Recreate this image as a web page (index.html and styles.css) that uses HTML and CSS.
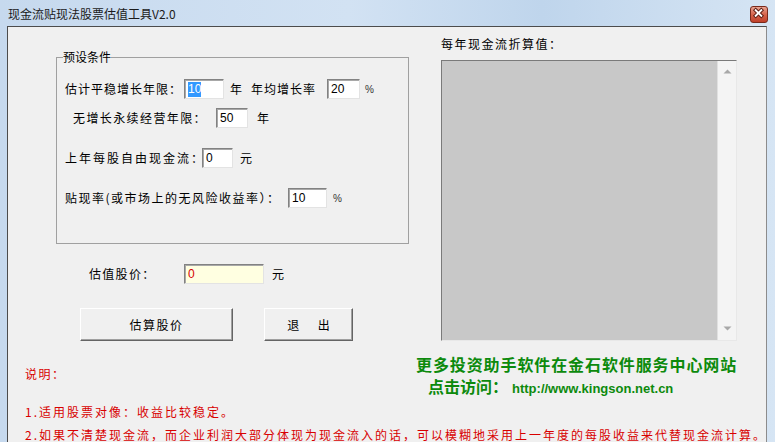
FILE: index.html
```html
<!DOCTYPE html>
<html lang="zh-CN">
  <head>
    <meta charset="UTF-8" />
    <title>现金流贴现法股票估值工具V2.0</title>
    <link rel="stylesheet" href="styles.css">
  </head>
  <body>
    <div class="window">
      <div class="titlebar">
        <span class="title">现金流贴现法股票估值工具V2.0</span>
        <div class="close">
          <svg width="18" height="17" viewBox="0 0 18 17">
            <path d="M6 5 L12 11 M12 5 L6 11" stroke="#5a1a10" stroke-width="4" stroke-linecap="square" />
            <path d="M6 5 L12 11 M12 5 L6 11" stroke="#ffffff" stroke-width="2" stroke-linecap="square" />
          </svg>
        </div>
      </div>
      <div class="client">
        <div class="top">
          <div class="form-col">
            <fieldset class="preset">
              <legend>预设条件</legend>
              <div class="row r1">
                <span class="lbl lbl-years">估计平稳增长年限：</span>
                <div class="field w40"><span class="sel">10</span></div>
                <span class="unit u1">年</span>
                <span class="lbl lbl-rate">年均增长率</span>
                <div class="field w33">20</div>
                <span class="pct p1">%</span>
              </div>
              <div class="row r2">
                <span class="lbl lbl-forever">无增长永续经营年限：</span>
                <div class="field w32">50</div>
                <span class="unit u2">年</span>
              </div>
              <div class="row r3">
                <span class="lbl lbl-cash">上年每股自由现金流：</span>
                <div class="field w31">0</div>
                <span class="unit u3">元</span>
              </div>
              <div class="row r4">
                <span class="lbl lbl-discount">贴现率(或市场上的无风险收益率）：</span>
                <div class="field w39">10</div>
                <span class="pct p2">%</span>
              </div>
            </fieldset>
            <div class="row price-row">
              <span class="lbl lbl-price">估值股价：</span>
              <div class="field w80 price">0</div>
              <span class="unit u4">元</span>
            </div>
            <div class="btn-row">
              <button class="button btn-calc">估算股价</button>
              <button class="button btn-exit">退 出</button>
            </div>
          </div>
          <div class="list-col">
            <div class="list-title">每年现金流折算值：</div>
            <div class="listbox">
              <div class="list-area"></div>
              <div class="scrollbar">
                <svg width="9" height="5" viewBox="0 0 9 5"><path d="M0.5 4.5 L4.5 0.5 L8.5 4.5 Z" fill="#a8a8a8" /></svg>
                <svg width="9" height="5" viewBox="0 0 9 5"><path d="M0.5 0.5 L4.5 4.5 L8.5 0.5 Z" fill="#a8a8a8" /></svg>
              </div>
            </div>
          </div>
        </div>
        <div class="mid">
          <div class="explain">说明：</div>
          <div class="promo">
            <div class="promo-line">更多投资助手软件在金石软件服务中心网站</div>
            <div class="promo-link">点击访问：<span class="url">http://www.kingson.net.cn</span></div>
          </div>
        </div>
        <div class="notes">
          <p>1.适用股票对像：收益比较稳定。</p>
          <p>2.如果不清楚现金流，而企业利润大部分体现为现金流入的话，可以模糊地采用上一年度的每股收益来代替现金流计算。</p>
        </div>
      </div>
    </div>
  </body>
</html>
```
FILE: styles.css
```css
* {
  margin: 0;
  padding: 0;
  box-sizing: border-box;
}

body {
  width: 775px;
  height: 442px;
  overflow: hidden;
  font-family: "Noto Sans CJK SC", sans-serif;
  font-size: 12px;
  color: #000;
}

.window {
  height: 442px;
  background: linear-gradient(90deg, #c6d9ee 0%, #d2e2f3 45%, #bfd5ec 70%, #d6e5f4 100%);
}

.titlebar {
  display: flex;
  justify-content: space-between;
  align-items: center;
  height: 26px;
  padding: 2px 7px 0 8px;
}

.title {
  color: #1b1b1b;
  line-height: 16px;
}

.close {
  width: 18px;
  height: 17px;
  border: 1px solid #7a2a1c;
  border-radius: 3px;
  background: linear-gradient(180deg, #e9a493 0%, #d6644c 50%, #c0402a 100%);
  display: flex;
  align-items: center;
  justify-content: center;
}

.close svg {
  display: block;
  margin-left: -1px;
  margin-top: -1px;
}

.client {
  margin: 0 8px 0 7px;
  height: 416px;
  background: #f0f0f0;
  border: 1px solid #4c4c4c;
  border-right-color: #8c8c8c;
  border-bottom: none;
}

.top {
  display: flex;
}

.form-col {
  width: 433px;
  padding-left: 48px;
}

.preset {
  margin-top: 23px;
  padding: 15px 0 0 8px;
  width: 353px;
  height: 194px;
  border: 1px solid #a0a0a0;
  min-width: 0;
}

.preset legend {
  margin-left: -2px;
  padding: 0;
  line-height: 14px;
}

.row {
  display: flex;
  align-items: center;
  height: 20px;
}

.r2 {
  margin-top: 9px;
  padding-left: 8px;
}

.r3, .r4 {
  margin-top: 20px;
}

.lbl {
  flex-shrink: 0;
  white-space: nowrap;
  line-height: 14px;
}

/* label widths put each field where it sits in the dialog */
.lbl-years {
  width: 119px;
  letter-spacing: 1px;
}

.lbl-rate {
  width: 76px;
  margin-left: 9px;
  letter-spacing: 1px;
}

.lbl-forever {
  width: 143px;
  letter-spacing: 1.4px;
}

.lbl-cash {
  width: 137px;
  letter-spacing: 2px;
}

.lbl-discount {
  width: 223px;
  letter-spacing: 1.5px;
}

.lbl-price {
  width: 95px;
  letter-spacing: 1.3px;
}

.field {
  flex-shrink: 0;
  height: 20px;
  border: 1px solid;
  border-color: #828282 #e3e3e3 #e3e3e3 #828282;
  box-shadow: inset 1px 1px 0 #a8a8a8;
  background: #fff;
  font-family: "Liberation Sans", Arial, sans-serif;
  font-size: 12px;
  line-height: 18px;
  padding-left: 3px;
  white-space: nowrap;
}

.w31 { width: 31px; }
.w32 { width: 32px; }
.w33 { width: 33px; }
.w39 { width: 39px; }
.w40 { width: 40px; }
.w80 { width: 80px; }

.sel {
  background: #3399ff;
  color: #fff;
  display: inline-block;
  line-height: 15px;
}

.unit {
  line-height: 14px;
}

.u1 { margin-left: 6px; }
.u2 { margin-left: 9px; }
.u3 { margin-left: 7px; }
.u4 { margin-left: 8px; }

.pct {
  font-family: "Liberation Sans", Arial, sans-serif;
  font-size: 10px;
  color: #333;
}

.p1 { margin-left: 5px; }
.p2 { margin-left: 6px; }

.price-row {
  margin-top: 20px;
  padding-left: 33px;
}

.price {
  background: #ffffe1;
  color: #d40000;
}

.btn-row {
  display: flex;
  margin-top: 24px;
  padding-left: 24px;
}

.button {
  height: 33px;
  border: 1px solid;
  border-color: #ffffff #646464 #646464 #ffffff;
  box-shadow: inset -1px -1px 0 #a0a0a0;
  background: #f0f0f0;
  font-family: "Noto Sans CJK SC", sans-serif;
  font-size: 12px;
  color: #000;
}

.btn-calc {
  width: 153px;
  letter-spacing: 1.5px;
}

.btn-exit {
  width: 89px;
  margin-left: 31px;
  letter-spacing: 8px;
  padding-left: 8px;
}

.list-col {
  padding-top: 10px;
}

.list-title {
  line-height: 14px;
  letter-spacing: 1.5px;
}

.listbox {
  display: flex;
  margin-top: 9px;
  width: 296px;
  height: 281px;
  border: 1px solid;
  border-color: #7a7a7a #e8e8e8 #e8e8e8 #7a7a7a;
}

.list-area {
  flex-grow: 1;
  background: #c8c8c8;
}

.scrollbar {
  width: 19px;
  background: #f4f4f4;
  border-left: 1px solid #e0e0e0;
  display: flex;
  flex-direction: column;
  justify-content: space-between;
  align-items: center;
  padding: 8px 0 9px;
}

.scrollbar svg {
  display: block;
}

.mid {
  display: flex;
}

.explain {
  width: 408px;
  padding-left: 17px;
  margin-top: 26px;
  line-height: 14px;
  color: #d80000;
  letter-spacing: 1.5px;
}

.promo {
  margin-top: 12px;
  color: #0c8a0c;
  font-weight: bold;
  white-space: nowrap;
}

.promo-line {
  font-size: 16px;
  line-height: 22px;
  letter-spacing: 0.9px;
}

.promo-link {
  font-size: 16px;
  line-height: 22px;
  padding-left: 12px;
}

.url {
  font-family: "Liberation Sans", Arial, sans-serif;
  font-size: 13px;
  margin-left: 4px;
}

.notes {
  padding-left: 17px;
  color: #d80000;
  letter-spacing: 2px;
  white-space: nowrap;
}

.notes p {
  line-height: 23px;
}
```
